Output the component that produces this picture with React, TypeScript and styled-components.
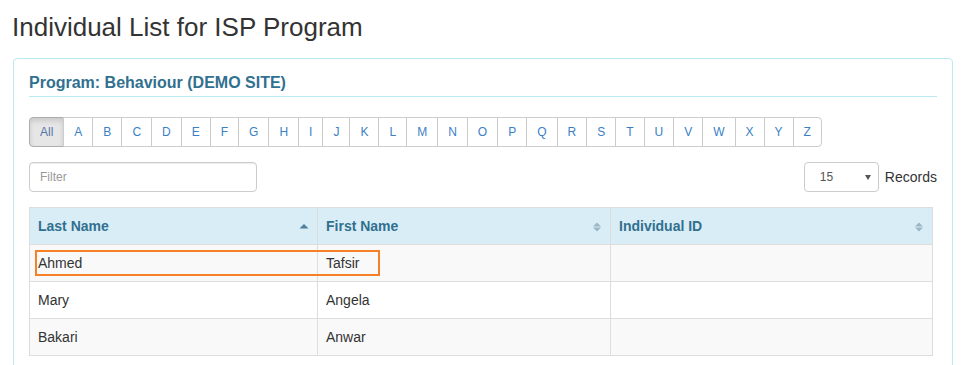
import { FC } from "react";
import styled, { createGlobalStyle } from "styled-components";

const letters = ["All", ..."ABCDEFGHIJKLMNOPQRSTUVWXYZ".split("")];

const rows = [
  { last: "Ahmed", first: "Tafsir", id: "" },
  { last: "Mary", first: "Angela", id: "" },
  { last: "Bakari", first: "Anwar", id: "" },
];

const SortAsc: FC = () => (
  <SortIcon width="10" height="12" viewBox="0 0 10 12">
    <path d="M0.5 7.5 L5 3 L9.5 7.5 Z" fill="#4f7f9a" />
  </SortIcon>
);

const SortBoth: FC = () => (
  <SortIcon width="10" height="12" viewBox="0 0 10 12">
    <path d="M1 5.5 L5 1.5 L9 5.5 Z" fill="#9db6c6" />
    <path d="M1 6.5 L5 10.5 L9 6.5 Z" fill="#9db6c6" />
  </SortIcon>
);

export default function App() {
  return (
    <Page>
      <GlobalStyle />
      <Title>Individual List for ISP Program</Title>
      <Panel>
        <PanelHeading>Program: Behaviour (DEMO SITE)</PanelHeading>
        <LetterBar>
          {letters.map((l) => (
            <LetterButton key={l} $active={l === "All"}>
              {l}
            </LetterButton>
          ))}
        </LetterBar>
        <Toolbar>
          <FilterInput placeholder="Filter" />
          <RecordsGroup>
            <SelectBox>
              <Select defaultValue="15">
                <option>10</option>
                <option>15</option>
                <option>25</option>
                <option>50</option>
              </Select>
              <Caret />
            </SelectBox>
            <RecordsLabel>Records</RecordsLabel>
          </RecordsGroup>
        </Toolbar>
        <TableWrap>
          <Table>
            <colgroup>
              <col style={{ width: 288 }} />
              <col style={{ width: 293 }} />
              <col />
            </colgroup>
            <thead>
              <tr>
                <Th>
                  Last Name
                  <SortAsc />
                </Th>
                <Th>
                  First Name
                  <SortBoth />
                </Th>
                <Th>
                  Individual ID
                  <SortBoth />
                </Th>
              </tr>
            </thead>
            <tbody>
              {rows.map((r, i) => (
                <Tr key={r.last} $striped={i % 2 === 0}>
                  <Td>{r.last}</Td>
                  <Td>{r.first}</Td>
                  <Td>{r.id}</Td>
                </Tr>
              ))}
            </tbody>
          </Table>
          <Highlight />
        </TableWrap>
      </Panel>
    </Page>
  );
}

const GlobalStyle = createGlobalStyle`
  body {
    margin: 0;
    background: #fff;
    font-family: "Liberation Sans", Arial, sans-serif;
    font-size: 14px;
    color: #333;
  }
`;

const Page = styled.div`
  padding: 13px 0 0 13px;
`;

const Title = styled.h1`
  margin: 0 0 16px -1px;
  font-size: 26px;
  font-weight: 400;
  line-height: 29px;
  color: #333;
`;

const Panel = styled.div`
  width: 908px;
  padding: 15px 15px 20px;
  border: 1px solid #bce8f1;
  border-radius: 4px;
`;

const PanelHeading = styled.h2`
  margin: 0 0 20px;
  padding-bottom: 4px;
  font-size: 16px;
  font-weight: 700;
  line-height: 18px;
  color: #31708f;
  border-bottom: 1px solid #bce8f1;
`;

const LetterBar = styled.div`
  display: flex;
`;

const LetterButton = styled.button<{ $active?: boolean }>`
  margin-left: -1px;
  padding: 5px 10px;
  height: 30px;
  font-family: "Liberation Sans", Arial, sans-serif;
  font-size: 12px;
  line-height: 18px;
  color: ${(p) => (p.$active ? "#5577a8" : "#3a7fc4")};
  background: ${(p) => (p.$active ? "#e6e6e6" : "#fff")};
  box-shadow: ${(p) =>
    p.$active ? "inset 0 3px 5px rgba(0, 0, 0, 0.125)" : "none"};
  border: 1px solid #ccc;
  border-radius: 0;
  cursor: pointer;

  &:first-child {
    margin-left: 0;
    border-radius: 4px 0 0 4px;
    border-color: #adadad;
  }

  &:last-child {
    border-radius: 0 4px 4px 0;
  }
`;

const Toolbar = styled.div`
  display: flex;
  justify-content: space-between;
  align-items: center;
  margin: 15px 0 15px;
`;

const FilterInput = styled.input`
  box-sizing: border-box;
  width: 228px;
  height: 30px;
  padding: 5px 10px;
  font-family: "Liberation Sans", Arial, sans-serif;
  font-size: 12px;
  color: #555;
  border: 1px solid #ccc;
  border-radius: 4px;
  box-shadow: inset 0 1px 1px rgba(0, 0, 0, 0.075);

  &::placeholder {
    color: #999;
  }
`;

const RecordsGroup = styled.div`
  display: flex;
  align-items: center;
  gap: 6px;
`;

const SelectBox = styled.div`
  position: relative;
  width: 75px;
  height: 30px;
`;

const Select = styled.select`
  appearance: none;
  box-sizing: border-box;
  width: 100%;
  height: 100%;
  padding: 0 0 0 15px;
  font-family: "Liberation Sans", Arial, sans-serif;
  font-size: 12px;
  color: #555;
  background: #fff;
  border: 1px solid #ccc;
  border-radius: 4px;
`;

const Caret = styled.span`
  position: absolute;
  right: 8px;
  top: 13px;
  width: 0;
  height: 0;
  border-left: 3.5px solid transparent;
  border-right: 3.5px solid transparent;
  border-top: 5px solid #555;
  pointer-events: none;
`;

const RecordsLabel = styled.span`
  font-size: 14px;
  color: #333;
`;

const TableWrap = styled.div`
  position: relative;
  width: 904px;
`;

const Table = styled.table`
  width: 100%;
  border-collapse: collapse;
  table-layout: fixed;
  border: 1px solid #ddd;
`;

const Th = styled.th`
  position: relative;
  padding: 8px;
  height: 20px;
  line-height: 20px;
  text-align: left;
  font-size: 14px;
  font-weight: 700;
  color: #31708f;
  background: #d9edf7;
  border: 1px solid #ddd;
`;

const SortIcon = styled.svg`
  position: absolute;
  right: 8px;
  top: 13px;
`;

const Tr = styled.tr<{ $striped?: boolean }>`
  background: ${(p) => (p.$striped ? "#f9f9f9" : "#fff")};
`;

const Td = styled.td`
  padding: 8px;
  height: 20px;
  line-height: 20px;
  font-size: 14px;
  color: #333;
  border: 1px solid #ddd;
`;

const Highlight = styled.div`
  position: absolute;
  left: 6px;
  top: 43px;
  width: 341px;
  height: 22px;
  border: 2px solid #f58025;
  pointer-events: none;
`;
